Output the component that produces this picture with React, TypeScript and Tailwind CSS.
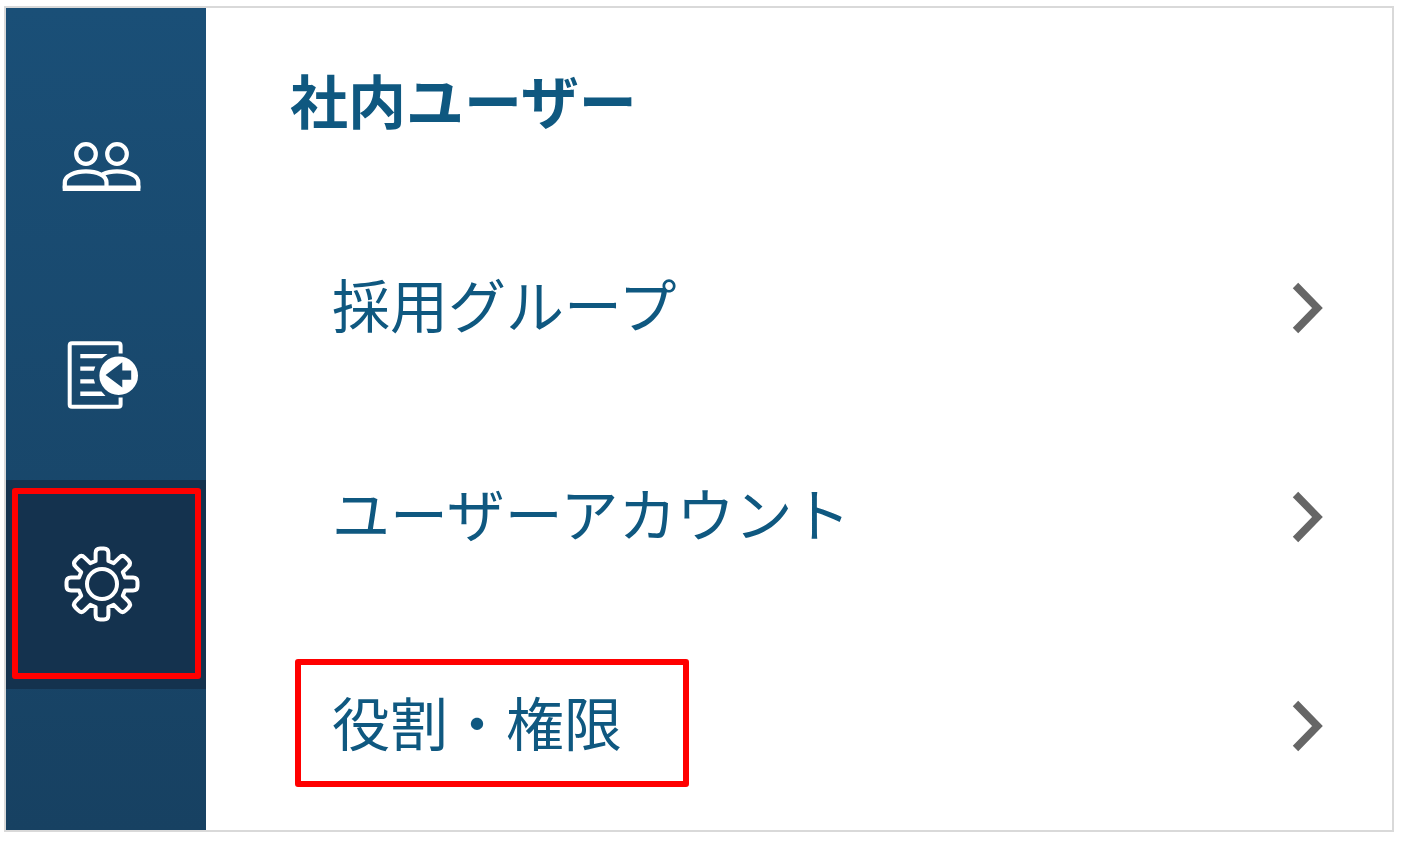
import React from "react";

const TEETH = 8;

function buildGearPath(outer: number, base: number, half: number, round: number): string {
  const parts: string[] = [];
  for (let i = 0; i < TEETH; i++) {
    const a = (i * 2 * Math.PI) / TEETH;
    const at = (x: number, y: number) =>
      `${(x * Math.cos(a) - y * Math.sin(a)).toFixed(2)} ${(x * Math.sin(a) + y * Math.cos(a)).toFixed(2)}`;
    parts.push(
      `${i === 0 ? "M" : "L"}${at(-half, -base)}`,
      `L${at(-half, -outer + round)}`,
      `Q${at(-half, -outer)} ${at(-half + round, -outer)}`,
      `L${at(half - round, -outer)}`,
      `Q${at(half, -outer)} ${at(half, -outer + round)}`,
      `L${at(half, -base)}`,
    );
  }
  return parts.join(" ") + "Z";
}

const GEAR_PATH = buildGearPath(35.5, 23, 6.4, 4.5);

function UsersIcon() {
  return (
    <svg aria-hidden="true" className="h-[76px] w-[110px]" viewBox="0 0 110 76" fill="none" stroke="white" strokeWidth="4.2">
      <circle cx="36" cy="25" r="9.8" />
      <circle cx="67" cy="25" r="9.8" />
      <path d="M14.8 59.6V53.5C14.8 46.5 25 42.4 36 42.4S56.5 46.5 56.5 53.5V59.6" />
      <path d="M52.5 45.5C57 43.3 62 42.4 67 42.4C78 42.4 88.3 46.5 88.3 53.5V59.6" />
      <path d="M12.7 59.2H90.4" strokeWidth="5.4" />
    </svg>
  );
}

function ImportDocumentIcon() {
  return (
    <svg aria-hidden="true" className="h-[90px] w-[110px]" viewBox="0 1 110 90">
      <path
        d="M70.6 23.5V15.5Q70.6 13.2 68.3 13.2H22Q19.7 13.2 19.7 15.500V74.5Q19.7 76.8 22 76.8H68.3Q70.6 76.8 70.6 74.5V67.5"
        fill="none"
        stroke="white"
        strokeWidth="4"
      />
      <path
        d="M30.3 24H57.5L52 28.200H30.3ZM30.3 36.500H45.3L43.8 40.800H30.3ZM30.3 49.200H43.8L45 53.400H30.3ZM30.3 61.600H51.5L55.5 65.900H30.3Z"
        fill="white"
      />
      <path
        fillRule="evenodd"
        d="M68.7 26.400A19.3 19.3 0 1 1 68.7 65A19.3 19.3 0 1 1 68.7 26.400ZM55.6 44.900L72.3 57.500V49.700H81.2V40.400H72.3V32.300Z"
        fill="white"
      />
    </svg>
  );
}

function GearIcon() {
  return (
    <svg
      aria-hidden="true"
      className="h-[90px] w-[110px]"
      viewBox="-52 -44 110 90"
      fill="none"
      stroke="white"
      strokeWidth="4"
      strokeLinejoin="round"
    >
      <path d={GEAR_PATH} />
      <circle r="15" />
    </svg>
  );
}

function ChevronIcon() {
  return (
    <svg aria-hidden="true" className="h-[52px] w-8 shrink-0" viewBox="0 0 32 52" fill="none" stroke="#666666" strokeWidth="7.6">
      <path d="M3.5 3.5L25.5 26L3.5 48.5" />
    </svg>
  );
}

const navItems = [
  { label: "ユーザー", icon: <UsersIcon />, active: false },
  { label: "インポート", icon: <ImportDocumentIcon />, active: false },
  { label: "設定", icon: <GearIcon />, active: true },
];

const menuItems = [
  { label: "採用グループ", highlighted: false },
  { label: "ユーザーアカウント", highlighted: false },
  { label: "役割・権限", highlighted: true },
];

export default function App() {
  return (
    <div className="min-h-screen bg-white pt-[6px] pr-[10px] pb-[10px] pl-1 font-['Noto_Sans_CJK_JP',sans-serif] text-[#0f5880]">
      <div className="flex border-2 border-[#d9d9d9]">
        <nav aria-label="メイン" className="flex w-[200px] shrink-0 flex-col bg-linear-to-b from-[#1a4f77] to-[#174162] pt-[54px]">
          {navItems.map((item) => (
            <button
              key={item.label}
              type="button"
              aria-label={item.label}
              aria-current={item.active ? "page" : undefined}
              className={
                item.active
                  ? "relative flex h-[209px] items-center justify-center bg-[#14324e] pr-[2px]"
                  : "flex h-[209px] items-center justify-center pr-[2px]"
              }
            >
              {item.icon}
              {item.active && (
                <span className="absolute top-2 right-[5px] bottom-[10px] left-[6px] rounded-[3px] border-6 border-[#ff0000]" />
              )}
            </button>
          ))}
        </nav>
        <main className="min-w-0 flex-1">
          <h1 className="flex h-[195px] items-center pb-[14px] pl-[84px] text-[58px] leading-[60px] font-bold">社内ユーザー</h1>
          <ul>
            {menuItems.map((item) => (
              <li key={item.label}>
                <a href="#" className="flex h-[209px] items-center justify-between pr-[68px] pl-[126px]">
                  <span className="relative pb-[10px] text-[58px] leading-[60px] whitespace-nowrap">
                    {item.label}
                    {item.highlighted && (
                      <span className="absolute -top-8 -right-[67px] -bottom-[26px] -left-[37px] rounded-[3px] border-6 border-[#ff0000]" />
                    )}
                  </span>
                  <ChevronIcon />
                </a>
              </li>
            ))}
          </ul>
        </main>
      </div>
    </div>
  );
}
